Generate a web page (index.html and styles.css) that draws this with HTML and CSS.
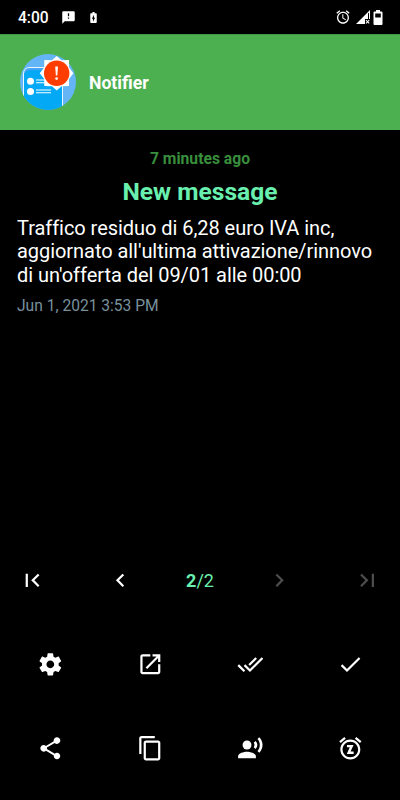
FILE: index.html
```html
<!DOCTYPE html>
<html lang="en">
<head>
    <meta charset="UTF-8">
    <meta name="viewport" content="width=device-width, initial-scale=1.0">
    <title>Notifier</title>
    <link rel="stylesheet" href="styles.css">
</head>
<body>
    <div class="status-bar">
        <span class="clock">4:00</span>
        <svg class="status-sms" viewBox="0 0 24 24"><path d="M20 2H4c-1.100 0-2 .9-2 2v18l4-4h14c1.100 0 2-.9 2-2V4c0-1.100-.9-2-2-2zm-7 12h-2v-2h2v2zm0-4h-2V5h2v5z"/></svg>
        <svg class="status-charging" viewBox="0 0 24 24"><path d="M16.500 4H14V2h-4v2H7.500C6.700 4 6 4.600 6 5.300v15.400C6 21.400 6.700 22 7.500 22h9c.8 0 1.500-.6 1.500-1.300V5.300C18 4.600 17.300 4 16.500 4zM11 20v-5.500H9L13 7v5.500h2L11 20z"/></svg>
        <svg class="status-alarm" viewBox="0 0 24 24"><path d="M22 5.720l-4.600-3.860-1.290 1.530 4.600 3.860L22 5.720zM7.880 3.390L6.600 1.860 2 5.710l1.290 1.530 4.590-3.850zM12.500 8H11v6l4.750 2.850.75-1.230-4-2.370V8zM12 4c-4.970 0-9 4.030-9 9s4.020 9 9 9c4.970 0 9-4.030 9-9s-4.030-9-9-9zm0 16c-3.870 0-7-3.130-7-7s3.130-7 7-7 7 3.130 7 7-3.130 7-7 7z"/></svg>
        <svg class="status-signal" viewBox="0 0 14 14"><path d="M0 14L14 0v9h-1V2.500L12 3.500V9H9v5z"/><path class="cross" d="M10 10.200l3.200 3.200M13.200 10.200L10 13.400"/></svg>
        <svg class="status-battery" viewBox="0 0 10 15"><path fill-rule="evenodd" d="M3 0h4v1.500h1.500q1 0 1 1V14q0 1-1 1h-7q-1 0-1-1V2.500q0-1 1-1H3zM2.200 3.500v4h5.600v-4z"/></svg>
    </div>

    <header class="app-bar">
        <svg class="logo" viewBox="0 0 56 56">
            <defs>
                <clipPath id="round"><circle cx="28" cy="28" r="28"/></clipPath>
            </defs>
            <g clip-path="url(#round)">
                <rect width="56" height="56" fill="#64b5f6"/>
                <path d="M3.500 56V20q0-6.500 6.500-6.500h32.500V56z" fill="#03a9f4"/>
                <path d="M3.500 20q0-6.500 6.500-6.500h20l-5 2.800H10q-3 0-6.500 3.700z" fill="#42a5f5"/>
                <path d="M3.500 56V20q0-6.500 6.500-6.500h32.500V56" fill="none" stroke="#fff" stroke-width=".9"/>
                <circle cx="10.500" cy="27.300" r="3.500" fill="#fff"/>
                <circle cx="10.500" cy="37.500" r="3.500" fill="#fff"/>
                <path d="M16 26h11M16 28.800h12M16 36h15M16 38.800h15" stroke="#fff" stroke-width="1.100"/>
            </g>
            <path d="M36.700 2l4.600 4.200 7.700-.2.100 7.500 4.300 5.800-4.300 5.600-.1 7.200-7.500.2-4.800 4.300-4.700-4.300-7.700-.2-.1-7.200-4.500-5.600 4.500-5.800.1-7.500 7.700.2z" fill="#fff"/>
            <circle cx="36.700" cy="19.300" r="12.700" fill="#ff3d00"/>
            <path d="M35.200 12.500h2.800l-.7 9h-1.400z" fill="#fff"/>
            <circle cx="36.600" cy="24.600" r="1.400" fill="#fff"/>
        </svg>
        <h1 class="app-title">Notifier</h1>
    </header>

    <main class="message">
        <div class="elapsed">7 minutes ago</div>
        <h2 class="message-title">New message</h2>
        <p class="message-text">Traffico residuo di 6,28 euro IVA inc, aggiornato all'ultima attivazione/rinnovo di un'offerta del 09/01 alle 00:00</p>
        <div class="message-date">Jun 1, 2021 3:53 PM</div>
    </main>

    <nav class="pager">
        <svg class="icon" viewBox="0 0 24 24"><path d="M18.410 16.590L13.820 12l4.590-4.590L17 6l-6 6 6 6zM6 6h2v12H6z"/></svg>
        <svg class="icon" viewBox="0 0 24 24"><path d="M15.410 7.410L14 6l-6 6 6 6 1.410-1.410L10.830 12z"/></svg>
        <span class="page-count"><b>2</b>/2</span>
        <svg class="icon disabled" viewBox="0 0 24 24"><path d="M10 6L8.590 7.410 13.170 12l-4.580 4.590L10 18l6-6z"/></svg>
        <svg class="icon disabled" viewBox="0 0 24 24"><path d="M5.590 7.410L10.180 12l-4.590 4.590L7 18l6-6-6-6zM16 6h2v12h-2z"/></svg>
    </nav>

    <div class="actions">
        <svg class="icon" viewBox="0 0 24 24"><path fill-rule="evenodd" d="M19.430 12.980c.04-.32.070-.64.070-.98s-.03-.66-.07-.98l2.110-1.650c.19-.15.240-.42.120-.64l-2-3.460c-.12-.22-.39-.3-.61-.22l-2.490 1c-.52-.4-1.080-.73-1.690-.98l-.38-2.650C14.460 2.180 14.250 2 14 2h-4c-.25 0-.46.180-.49.420l-.38 2.650c-.61.250-1.170.59-1.690.98l-2.490-1c-.23-.09-.49 0-.61.220l-2 3.460c-.13.220-.07.490.12.640l2.110 1.650c-.04.320-.07.650-.07.980s.03.660.070.980l-2.110 1.650c-.19.150-.24.420-.12.640l2 3.460c.12.220.39.300.61.220l2.490-1c.52.400 1.080.73 1.690.98l.38 2.650c.03.240.24.420.49.420h4c.25 0 .46-.18.490-.42l.38-2.650c.61-.25 1.170-.59 1.690-.98l2.490 1c.23.090.49 0 .61-.22l2-3.460c.12-.22.070-.49-.12-.64l-2.110-1.650zM12 15.500c-1.930 0-3.500-1.570-3.500-3.500s1.570-3.500 3.500-3.500 3.500 1.570 3.500 3.500-1.570 3.500-3.500 3.500z"/></svg>
        <svg class="icon" viewBox="0 0 24 24"><path d="M19 19H5V5h7V3H5c-1.110 0-2 .9-2 2v14c0 1.100.89 2 2 2h14c1.100 0 2-.9 2-2v-7h-2v7zM14 3v2h3.590l-9.830 9.830 1.410 1.410L19 6.410V10h2V3h-7z"/></svg>
        <svg class="icon" viewBox="0 0 24 24"><path d="M18 7l-1.410-1.410-6.340 6.340 1.410 1.410L18 7zm4.240-1.410L11.660 16.170 7.480 12l-1.410 1.410L11.660 19l12-12-1.420-1.410zM.41 13.410L6 19l1.410-1.410L1.830 12 .41 13.410z"/></svg>
        <svg class="icon" viewBox="0 0 24 24"><path d="M9 16.170L4.830 12l-1.420 1.410L9 19 21 7l-1.410-1.410z"/></svg>
        <svg class="icon" viewBox="0 0 24 24"><path d="M18 16.080c-.76 0-1.440.3-1.960.77L8.910 12.700c.05-.23.090-.46.090-.7s-.04-.47-.09-.7l7.050-4.110c.54.5 1.250.81 2.040.81 1.660 0 3-1.340 3-3s-1.340-3-3-3-3 1.340-3 3c0 .24.040.47.090.7L8.040 9.810C7.500 9.310 6.790 9 6 9c-1.660 0-3 1.340-3 3s1.340 3 3 3c.79 0 1.500-.31 2.040-.81l7.120 4.160c-.05.210-.08.430-.08.650 0 1.610 1.310 2.920 2.920 2.920s2.920-1.310 2.920-2.920-1.310-2.920-2.920-2.920z"/></svg>
        <svg class="icon" viewBox="0 0 24 24"><path d="M16 1H4c-1.100 0-2 .9-2 2v14h2V3h12V1zm3 4H8c-1.100 0-2 .9-2 2v14c0 1.100.9 2 2 2h11c1.100 0 2-.9 2-2V7c0-1.100-.9-2-2-2zm0 16H8V7h11v14z"/></svg>
        <svg class="icon" viewBox="0 0 24 24"><circle cx="9" cy="9" r="4"/><path d="M9 15c-2.670 0-8 1.340-8 4v2h16v-2c0-2.660-5.330-4-8-4zm7.760-9.640l-1.680 1.690c.84 1.180.84 2.710 0 3.890l1.680 1.690c2.020-2.020 2.020-5.070 0-7.270zM20.070 2l-1.630 1.630c2.770 3.020 2.770 7.560 0 10.740L20.070 16c3.900-3.890 3.910-9.950 0-14z"/></svg>
        <svg class="icon" viewBox="0 0 24 24"><path d="M7.880 3.390L6.600 1.860 2 5.710l1.290 1.530 4.590-3.850zM22 5.720l-4.600-3.860-1.290 1.530 4.600 3.860L22 5.720zM12 4c-4.970 0-9 4.030-9 9s4.020 9 9 9c4.970 0 9-4.030 9-9s-4.030-9-9-9zm0 16c-3.870 0-7-3.130-7-7s3.130-7 7-7 7 3.130 7 7-3.130 7-7 7z"/><path class="snooze-z" d="M9 10h4.200L10.500 16H15"/></svg>
    </div>
</body>
</html>
```
FILE: styles.css
```css
body {
    background-color: #000;
    color: #fff;
    font-family: Roboto, sans-serif;
    display: flex;
    flex-direction: column;
    height: 800px;
    margin: 0;
}

svg {
    display: block;
    fill: #fff;
    flex: none;
}

.status-bar {
    display: flex;
    align-items: center;
    height: 34px;
    padding: 0 17px 0 18px;
    box-sizing: border-box;
}

.clock {
    padding-top: 2px;
    font-size: 15.6px;
    font-weight: 500;
    line-height: 32px;
}

.status-sms {
    width: 15px;
    height: 15px;
    margin-left: 12px;
}

.status-charging {
    width: 13px;
    height: 13px;
    margin-left: 11px;
}

.status-alarm {
    width: 16px;
    height: 16px;
    margin-left: auto;
}

.status-signal {
    width: 14px;
    height: 14px;
    margin-left: 5px;
}

.status-signal .cross {
    stroke: #fff;
    stroke-width: 1.1;
}

.status-battery {
    width: 10px;
    height: 15px;
    margin-left: 3px;
}

.app-bar {
    display: flex;
    align-items: center;
    gap: 13px;
    height: 96px;
    padding: 0 20px 1px;
    background-color: #4caf50;
    border-top: 1px solid #419544;
    box-sizing: border-box;
}

.logo {
    width: 56px;
    height: 56px;
}

.app-title {
    margin: 0;
    padding-top: 1px;
    font-size: 17.6px;
    font-weight: 700;
}

.message {
    flex: 1;
    padding: 19px 17px 0;
}

.elapsed {
    color: #388e3c;
    font-size: 15.7px;
    font-weight: 700;
    line-height: 20px;
    text-align: center;
}

.message-title {
    margin: 7px 0 0;
    color: #69f0ae;
    font-size: 24.6px;
    font-weight: 700;
    line-height: 32px;
    text-align: center;
}

.message-text {
    margin: 9px 0 0;
    font-size: 20px;
    letter-spacing: -0.05px;
    line-height: 23.4px;
}

.message-date {
    margin-top: 9px;
    color: #78909c;
    font-size: 15.6px;
    line-height: 20px;
}

.icon {
    width: 26.67px;
    height: 26.67px;
}

.pager {
    display: grid;
    grid-template-columns: 64px 112px 48px 111px 65px;
    align-items: center;
    justify-items: center;
    height: 84px;
}

.page-count {
    color: #69f0ae;
    font-size: 18px;
}

.pager .disabled {
    fill: #4d4d4d;
}

.actions {
    display: grid;
    grid-template-columns: repeat(4, 1fr);
    grid-auto-rows: 84.5px;
    align-items: center;
    justify-items: center;
    padding-bottom: 9px;
}

.snooze-z {
    fill: none;
    stroke: #fff;
    stroke-width: 2.2;
}
```
